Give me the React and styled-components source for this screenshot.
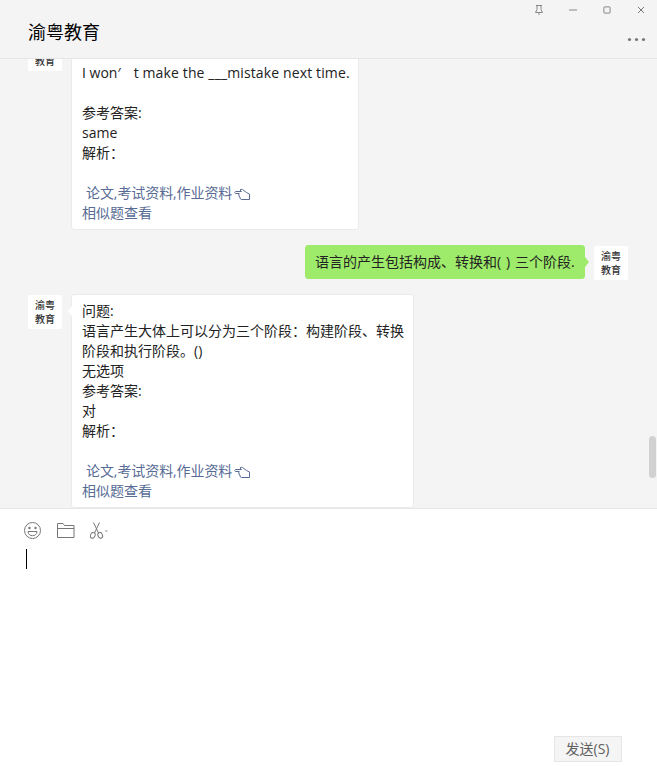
import React from "react";
import styled, { createGlobalStyle, css } from "styled-components";

const GlobalStyle = createGlobalStyle`
  * { box-sizing: border-box; }
  body {
    margin: 0;
    overflow: hidden;
    font-family: "Open Sans", "Noto Sans CJK SC", sans-serif;
  }
`;

const Window = styled.div`
  width: 657px;
  height: 766px;
  display: flex;
  flex-direction: column;
  background: #f4f4f4;
`;

const Header = styled.header`
  height: 59px;
  flex: none;
  display: flex;
  justify-content: space-between;
  padding-left: 28px;
  border-bottom: 1px solid #e6e6e6;
`;

const Title = styled.h1`
  margin: 18px 0 0;
  font: 400 18px/27px "Noto Sans CJK SC", sans-serif;
  color: #000;
`;

const HeaderTools = styled.div`
  display: flex;
  flex-direction: column;
  align-items: flex-end;
`;

const WindowControls = styled.div`
  display: flex;
  height: 20px;
  margin-right: -1px;
`;

const Control = styled.button`
  width: 34px;
  height: 20px;
  padding: 0;
  border: 0;
  background: none;
  display: flex;
  align-items: center;
  justify-content: center;
`;

const MoreButton = styled.button`
  margin: 13px 11px 0 0;
  padding: 0;
  border: 0;
  background: none;
  display: flex;
`;

const ChatArea = styled.main`
  height: 449px;
  flex: none;
  display: flex;
  overflow: hidden;
`;

const Messages = styled.div`
  flex: 1;
  display: flex;
  flex-direction: column;
  gap: 15px;
  margin-top: -23px;
  padding: 0 0 0 28px;
`;

const MessageRow = styled.div`
  flex: none;
  display: flex;
  align-items: flex-start;
  gap: 9px;
  justify-content: ${(p) => (p.$own ? "flex-end" : "flex-start")};
  padding-right: ${(p) => (p.$own ? "21px" : "0")};
  margin-bottom: ${(p) => (p.$own ? "-1px" : "0")};
`;

const AvatarBox = styled.div`
  width: 34px;
  height: 34px;
  margin-top: 1px;
  flex: none;
  display: flex;
  flex-direction: column;
  align-items: center;
  justify-content: center;
  border-radius: 2px;
  background: #fff;
  color: #333;
  font: 500 10px/14px "Noto Sans CJK SC", sans-serif;
`;

const Bubble = styled.div`
  position: relative;
  width: ${(p) => p.$width}px;
  min-height: 34px;
  padding: 6px 0 6px 10px;
  border: 1px solid #ebebeb;
  border-radius: 3px;
  background: #fff;
  color: #222;
  font-size: 14px;
  line-height: 20px;

  &::before {
    content: "";
    position: absolute;
    top: 11px;
    left: -4px;
    border: solid transparent;
    border-width: 5px 4px 5px 0;
    border-right-color: #fff;
  }

  ${(p) =>
    p.$own &&
    css`
      padding-left: 9px;
      border-color: #9eea6a;
      background: #9eea6a;
      &::before {
        left: auto;
        right: -5px;
        border-width: 5px 0 5px 4px;
        border-left-color: #9eea6a;
      }
    `}
`;

const Line = styled.div`
  height: 20px;
  white-space: pre;
  display: flex;
  align-items: center;
`;

const Part = styled.span`
  letter-spacing: ${(p) => p.$spacing || 0}px;
`;

const Link = styled.a`
  height: 20px;
  display: flex;
  align-items: center;
  white-space: pre;
  color: #576b95;
  padding-left: ${(p) => p.$indent || 0}px;

  svg { margin: 3px 0 0 2px; }
`;

const ScrollRail = styled.div`
  width: 8px;
  padding-top: 377px;
`;

const ScrollThumb = styled.div`
  width: 7px;
  height: 42px;
  border-radius: 3.5px;
  background: #d1d1d1;
`;

const Composer = styled.section`
  flex: 1;
  display: flex;
  flex-direction: column;
  border-top: 1px solid #e7e7e7;
  background: #fff;
`;

const Toolbar = styled.div`
  display: flex;
  align-items: center;
  gap: 15px;
  height: 18px;
  margin: 13px 0 0 24px;
`;

const Editor = styled.div`
  flex: 1;
  padding: 9px 0 0 26px;
`;

const Caret = styled.div`
  width: 1px;
  height: 20px;
  background: #000;
`;

const SendButton = styled.button`
  align-self: flex-end;
  width: 68px;
  height: 26px;
  margin: 0 35px 4px 0;
  padding: 0 1px 0 0;
  border: 1px solid #e5e5e5;
  background: #f5f5f5;
  color: #606060;
  font: 14px/24px "Open Sans", "Noto Sans CJK SC", sans-serif;
`;

const PinIcon = () => (
  <svg width="10" height="12" viewBox="0 0 10 12" fill="none" stroke="#888">
    <path d="M2 1.5h6M3 1.5v4L1.5 8.5h7L7 5.5v-4M5 8.5V11" />
  </svg>
);

const MinimizeIcon = () => (
  <svg width="8" height="8" viewBox="0 0 8 8">
    <path d="M0 4h8" stroke="#888" />
  </svg>
);

const MaximizeIcon = () => (
  <svg width="8" height="8" viewBox="0 0 8 8" fill="none" stroke="#888">
    <rect x=".9" y=".9" width="6.2" height="6.2" rx=".5" />
  </svg>
);

const CloseIcon = () => (
  <svg width="8" height="8" viewBox="0 0 8 8">
    <path d="M1 1l6 6M7 1L1 7" stroke="#777" />
  </svg>
);

const DotsIcon = () => (
  <svg width="19" height="14" viewBox="0 0 19 14" fill="#777">
    <circle cx="2.5" cy="6.5" r="1.6" />
    <circle cx="9.5" cy="6.5" r="1.6" />
    <circle cx="16.5" cy="6.5" r="1.6" />
  </svg>
);

const HandIcon = () => (
  <svg width="17" height="13" viewBox="0 0 17 13" fill="none" stroke="#576b95" strokeLinejoin="round">
    <path d="M7.5 3.5H1.5Q0 4.5 1.5 5.5H5.5M7.5 3.5L6 2Q7 .8 8.5 1.5L12.5 4.5L15.5 6V11.5H7.5L6 10.5V9L5 8.5V7L4.5 5.5" />
  </svg>
);

const SmileIcon = () => (
  <svg width="18" height="18" viewBox="0 0 18 18" fill="none" stroke="#777">
    <circle cx="8.5" cy="8.5" r="8" />
    <path d="M4 9.5h9c0 5.6-9 5.6-9 0z" />
    <circle cx="5.5" cy="6" r="1.2" fill="#777" stroke="none" />
    <circle cx="11.5" cy="6" r="1.2" fill="#777" stroke="none" />
  </svg>
);

const FolderIcon = () => (
  <svg width="18" height="18" viewBox="0 0 18 18" fill="none" stroke="#777">
    <path d="M.5 15.5v-14h5.5l1.5 2h9.5v12zM.5 6.5H17" />
  </svg>
);

const ScissorsIcon = () => (
  <svg width="19" height="18" viewBox="0 0 19 18" fill="none" stroke="#777">
    <path d="M3.5 .5l5.2 11M9.5 .5L4.3 11.5" />
    <ellipse cx="2.8" cy="13.3" rx="2.2" ry="3" transform="rotate(25 2.8 13.3)" />
    <ellipse cx="10.2" cy="13.3" rx="2.2" ry="3" transform="rotate(-25 10.2 13.3)" />
    <path d="M14.5 8.5H18l-1.75 1.4z" fill="#999" stroke="none" />
  </svg>
);

const Avatar = () => (
  <AvatarBox>
    <span>渝粤</span>
    <span>教育</span>
  </AvatarBox>
);

const Resources = () => (
  <>
    <Line />
    <Link $indent={4}>
      <Part $spacing={-0.08}>论文,考试资料,作业资料</Part>
      <HandIcon />
    </Link>
    <Link>相似题查看</Link>
  </>
);

export default function App() {
  return (
    <Window>
      <GlobalStyle />
      <Header>
        <Title>渝粤教育</Title>
        <HeaderTools>
          <WindowControls>
            <Control aria-label="pin"><PinIcon /></Control>
            <Control aria-label="minimize"><MinimizeIcon /></Control>
            <Control aria-label="maximize"><MaximizeIcon /></Control>
            <Control aria-label="close"><CloseIcon /></Control>
          </WindowControls>
          <MoreButton aria-label="more"><DotsIcon /></MoreButton>
        </HeaderTools>
      </Header>
      <ChatArea>
        <Messages>
          <MessageRow>
            <Avatar />
            <Bubble $width={288}>
              <Line />
              <Line>
                <Part>I won</Part>
                <Part $spacing={13}>′</Part>
                <Part $spacing={0.13}>t make the ___mistake next time.</Part>
              </Line>
              <Line />
              <Line>参考答案:</Line>
              <Line>same</Line>
              <Line>解析：</Line>
              <Resources />
            </Bubble>
          </MessageRow>
          <MessageRow $own>
            <Bubble $own $width={280}>
              <Line>
                <Part>语言的产生包括构成、转换和</Part>
                <Part $spacing={0.6}>( ) </Part>
                <Part>三个阶段.</Part>
              </Line>
            </Bubble>
            <Avatar />
          </MessageRow>
          <MessageRow>
            <Avatar />
            <Bubble $width={343}>
              <Line>问题:</Line>
              <Line>语言产生大体上可以分为三个阶段：构建阶段、转换</Line>
              <Line>阶段和执行阶段。()</Line>
              <Line>无选项</Line>
              <Line>参考答案:</Line>
              <Line>对</Line>
              <Line>解析：</Line>
              <Resources />
            </Bubble>
          </MessageRow>
        </Messages>
        <ScrollRail><ScrollThumb /></ScrollRail>
      </ChatArea>
      <Composer>
        <Toolbar>
          <SmileIcon />
          <FolderIcon />
          <ScissorsIcon />
        </Toolbar>
        <Editor><Caret /></Editor>
        <SendButton>发送(S)</SendButton>
      </Composer>
    </Window>
  );
}
